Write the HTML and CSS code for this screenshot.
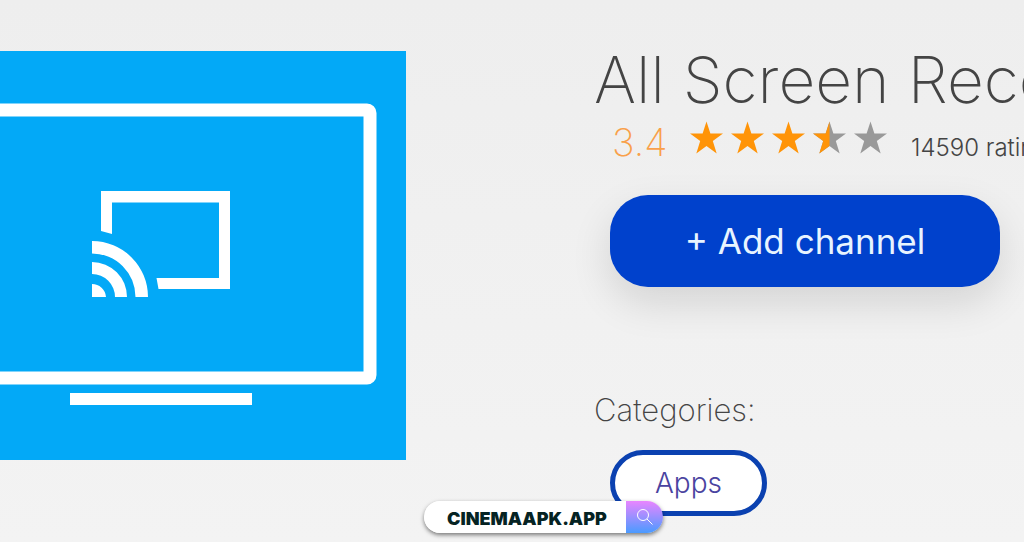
FILE: index.html
```
<!DOCTYPE html>
<html lang="en">
<head>
    <meta charset="UTF-8">
    <meta name="viewport" content="width=device-width, initial-scale=1.0">
    <title>All Screen Receiver</title>
    <link rel="stylesheet" href="styles.css">
</head>
<body>
    <main class="channel">
        <svg class="poster" viewBox="0 0 406 409" role="img" aria-label="All Screen Receiver logo">
            <rect width="406" height="409" fill="#03a9f7"/>
            <!-- tv -->
            <rect x="-122" y="59" width="492" height="268" rx="3" fill="none" stroke="#fff" stroke-width="13"/>
            <rect x="70" y="342" width="182" height="12" fill="#fff"/>
            <!-- cast symbol -->
            <path d="M101 140H230V238H158.500L156.500 227H219V151.500H112V183L101 180z" fill="#fff"/>
            <path d="M92 190A56 56 0 0 1 148 246H135.500A43.500 43.500 0 0 0 92 202.500zM92 211A35 35 0 0 1 127 246H115A23 23 0 0 0 92 223zM92 233A14 14 0 0 1 106 246H92z" fill="#fff"/>
        </svg>

        <section class="details">
            <h1 class="title">All Screen Receiver</h1>
            <div class="rating">
                <span class="score">3.4</span>
                <span class="stars" role="img" aria-label="3.4 out of 5 stars">
                    <svg class="star" viewBox="0 0 34 33"><path d="M17 0l4 12.500h13L23.500 20l4 13L17 25.200 6.500 33l4-13L0 12.500h13z"/></svg>
                    <svg class="star" viewBox="0 0 34 33"><path d="M17 0l4 12.500h13L23.500 20l4 13L17 25.200 6.500 33l4-13L0 12.500h13z"/></svg>
                    <svg class="star" viewBox="0 0 34 33"><path d="M17 0l4 12.500h13L23.500 20l4 13L17 25.200 6.500 33l4-13L0 12.500h13z"/></svg>
                    <svg class="star star-empty" viewBox="0 0 34 33"><path d="M17 0l4 12.500h13L23.500 20l4 13L17 25.200 6.500 33l4-13L0 12.500h13z"/><path class="half" d="M17 0v25.200L6.500 33l4-13L0 12.500h13z"/></svg>
                    <svg class="star star-empty" viewBox="0 0 34 33"><path d="M17 0l4 12.500h13L23.500 20l4 13L17 25.200 6.500 33l4-13L0 12.500h13z"/></svg>
                </span>
                <span class="count">14590 ratings</span>
            </div>
            <button class="add-button" type="button">+ Add channel</button>
            <p class="categories-label">Categories:</p>
            <a class="category" href="#">Apps</a>
        </section>
    </main>

    <form class="search">
        <input class="search-input" type="text" value="CINEMAAPK.APP" aria-label="Search">
        <button class="search-button" type="button" aria-label="Search">
            <svg class="search-icon" viewBox="0 0 18 18"><circle cx="7" cy="7" r="5.500"/><path d="M11 11l5.500 5.500"/></svg>
        </button>
    </form>
</body>
</html>
```
FILE: styles.css
```
* {
    box-sizing: border-box;
}

body {
    margin: 0;
    position: relative;
    min-height: 100vh;
    overflow: hidden;
    background: linear-gradient(#eeeeee, #f3f3f3);
    font-family: Inter, sans-serif;
    font-weight: 300;
    color: #444;
}

.channel {
    display: grid;
    grid-template-columns: 406fr 618fr;
    align-items: start;
    padding-top: 51px;
}
.poster {
    display: block;
    width: 100%;
}
.details {
    display: flex;
    flex-direction: column;
    align-items: flex-start;
    min-width: 0;
    padding-left: 188px;
    overflow: hidden;
    white-space: nowrap;
}

.title {
    margin: 0;
    font-size: 64px;
    font-weight: 200;
    line-height: 58px;
}
.rating {
    display: flex;
    align-items: center;
    margin-left: 18px;
    height: 58px;
}
.score {
    width: 78px;
    padding-top: 8px;
    font-size: 38px;
    font-weight: 200;
    color: #f9a04a;
}
.stars {
    display: flex;
    gap: 8px;
    margin-bottom: 2px;
}
.star {
    width: 33px;
    height: 33px;
    fill: #ff9408;
}
.star-empty {
    fill: #999;
}
.half {
    fill: #ff9408;
}
.count {
    margin-left: 24px;
    padding-top: 18px;
    font-size: 24px;
}

.add-button {
    width: 390px;
    height: 92px;
    margin: 28px 0 0 16px;
    border: none;
    border-radius: 38px;
    background: #0041cc;
    box-shadow: 0 16px 40px rgba(0, 0, 0, 0.12);
    color: #e8f4ff;
    font-family: inherit;
    font-size: 35px;
    font-weight: 400;
    cursor: pointer;
}
.categories-label {
    margin: 103px 0 0;
    font-size: 31px;
    font-weight: 200;
    line-height: 40px;
}
.category {
    margin: 20px 0 0 16px;
    padding: 0 40px;
    border: 5px solid #0b41b0;
    border-radius: 33px;
    background: #fff;
    color: #4a43a0;
    font-size: 28px;
    line-height: 56px;
    text-decoration: none;
}

/* floating search pill */
.search {
    position: absolute;
    left: 50%;
    bottom: 9px;
    display: flex;
    width: 239px;
    height: 32px;
    margin-left: -88px;
    border-radius: 16px;
    box-shadow: 0 2px 4px rgba(0, 0, 0, 0.5);
}
.search-input {
    flex: 1;
    min-width: 0;
    padding: 2px 0 0 23px;
    border: none;
    border-radius: 16px 0 0 16px;
    background: #fff;
    color: #052323;
    font-family: Inter, sans-serif;
    font-size: 18px;
    font-weight: 900;
}
.search-button {
    display: flex;
    align-items: center;
    justify-content: center;
    width: 37px;
    padding: 0;
    border: none;
    border-radius: 0 16px 16px 0;
    background: linear-gradient(#e985ff, #4a9bff);
}
.search-icon {
    width: 18px;
    height: 18px;
    fill: none;
    stroke: #fff;
    stroke-width: 1;
}
```
